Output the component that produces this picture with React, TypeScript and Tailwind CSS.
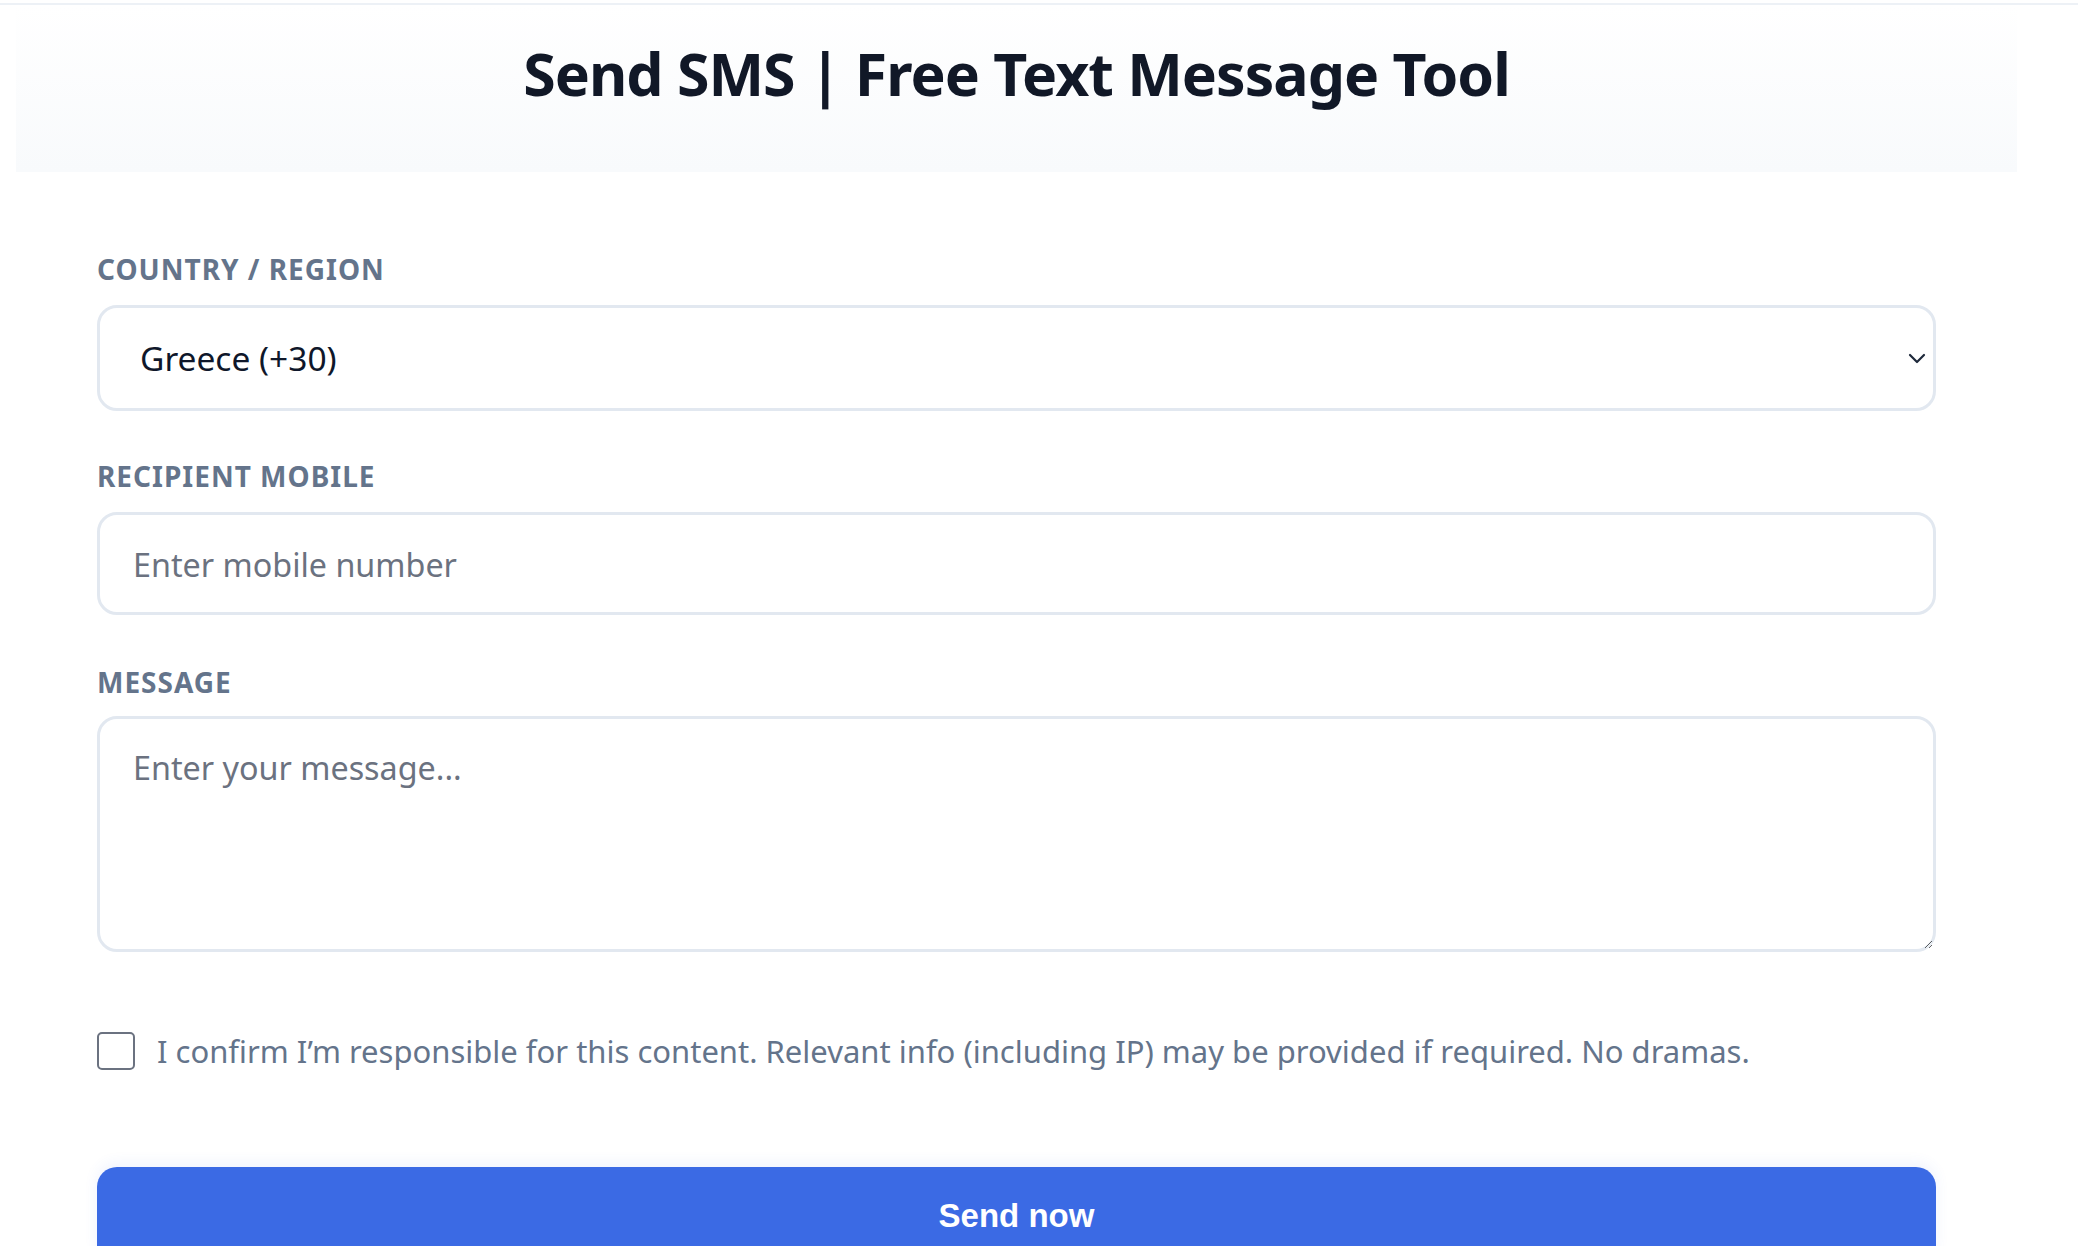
import React, { useState } from 'react';

const font = { fontFamily: '"Noto Sans", "Open Sans", sans-serif' };

const App = () => {
  const [agree, setAgree] = useState(false);

  return (
    <div className="min-h-screen bg-white" style={font}>
      <div className="h-[2px] mt-[3px] bg-[#edf1f6]"></div>

      <div className="ml-[16px] w-[2001px]">
        {/* header */}
        <div className="h-[167px] bg-linear-to-b from-white to-[#f8fafc] flex justify-center pt-[30px]">
          <h1 className="text-[59px] leading-[76px] font-bold text-[#111827] tracking-[-1px]">
            Send SMS | Free Text Message Tool
          </h1>
        </div>

        {/* form */}
        <div className="px-[81px] pt-[83px]">
          <label className="block text-[28px] leading-[28px] font-bold uppercase tracking-[1px] text-[#64748b] mb-[22px]">
            Country / Region
          </label>
          <div className="h-[106px] border-[3px] border-[#e2e8f0] rounded-[20px] flex items-center justify-between pl-[40px] pr-[7px]">
            <span className="text-[33.5px] text-[#0f172a]">Greece (+30)</span>
            <svg width="18" height="11" viewBox="0 0 18 11" fill="none" stroke="#1e293b" strokeWidth="2.2" strokeLinecap="round" strokeLinejoin="round">
              <path d="M2 2l7 7 7-7" />
            </svg>
          </div>

          <label className="block mt-[51px] text-[28px] leading-[28px] font-bold uppercase tracking-[1px] text-[#64748b] mb-[22px]">
            Recipient Mobile
          </label>
          <input
            type="text"
            placeholder="Enter mobile number"
            className="w-full h-[103px] border-[3px] border-[#e2e8f0] rounded-[20px] pl-[33px] text-[32.3px] text-[#0f172a] placeholder:text-[#6b7280] outline-none"
          />

          <label className="block mt-[53px] text-[28px] leading-[28px] font-bold uppercase tracking-[1px] text-[#64748b] mb-[20px]">
            Message
          </label>
          <textarea
            placeholder="Enter your message..."
            className="block w-full h-[236px] border-[3px] border-[#e2e8f0] rounded-[20px] px-[33px] pt-[23px] text-[32.3px] leading-[50px] text-[#0f172a] placeholder:text-[#6b7280] outline-none resize-y"
          />

          <label className="flex items-center gap-[22px] mt-[76px] cursor-pointer">
            <input
              type="checkbox"
              checked={agree}
              onChange={() => setAgree(!agree)}
              className="appearance-none w-[38px] h-[38px] border-2 border-[#6b7280] rounded-[5px] bg-white shrink-0 checked:bg-[#3b6ae4] checked:border-[#3b6ae4]"
            />
            <span className="text-[31px] text-[#64748b]">
              I confirm I’m responsible for this content. Relevant info (including IP) may be provided if required. No dramas.
            </span>
          </label>

          <button
            className="mt-[92px] w-full h-[99px] rounded-[20px] bg-[#3b6ae4] text-white text-[33px] font-bold shadow-[0_-4px_14px_rgba(59,106,228,0.08)]"
            style={{ fontFamily: '"Liberation Sans", Arial, sans-serif' }}
          >
            Send now
          </button>
        </div>
      </div>
    </div>
  );
};

export default App;
